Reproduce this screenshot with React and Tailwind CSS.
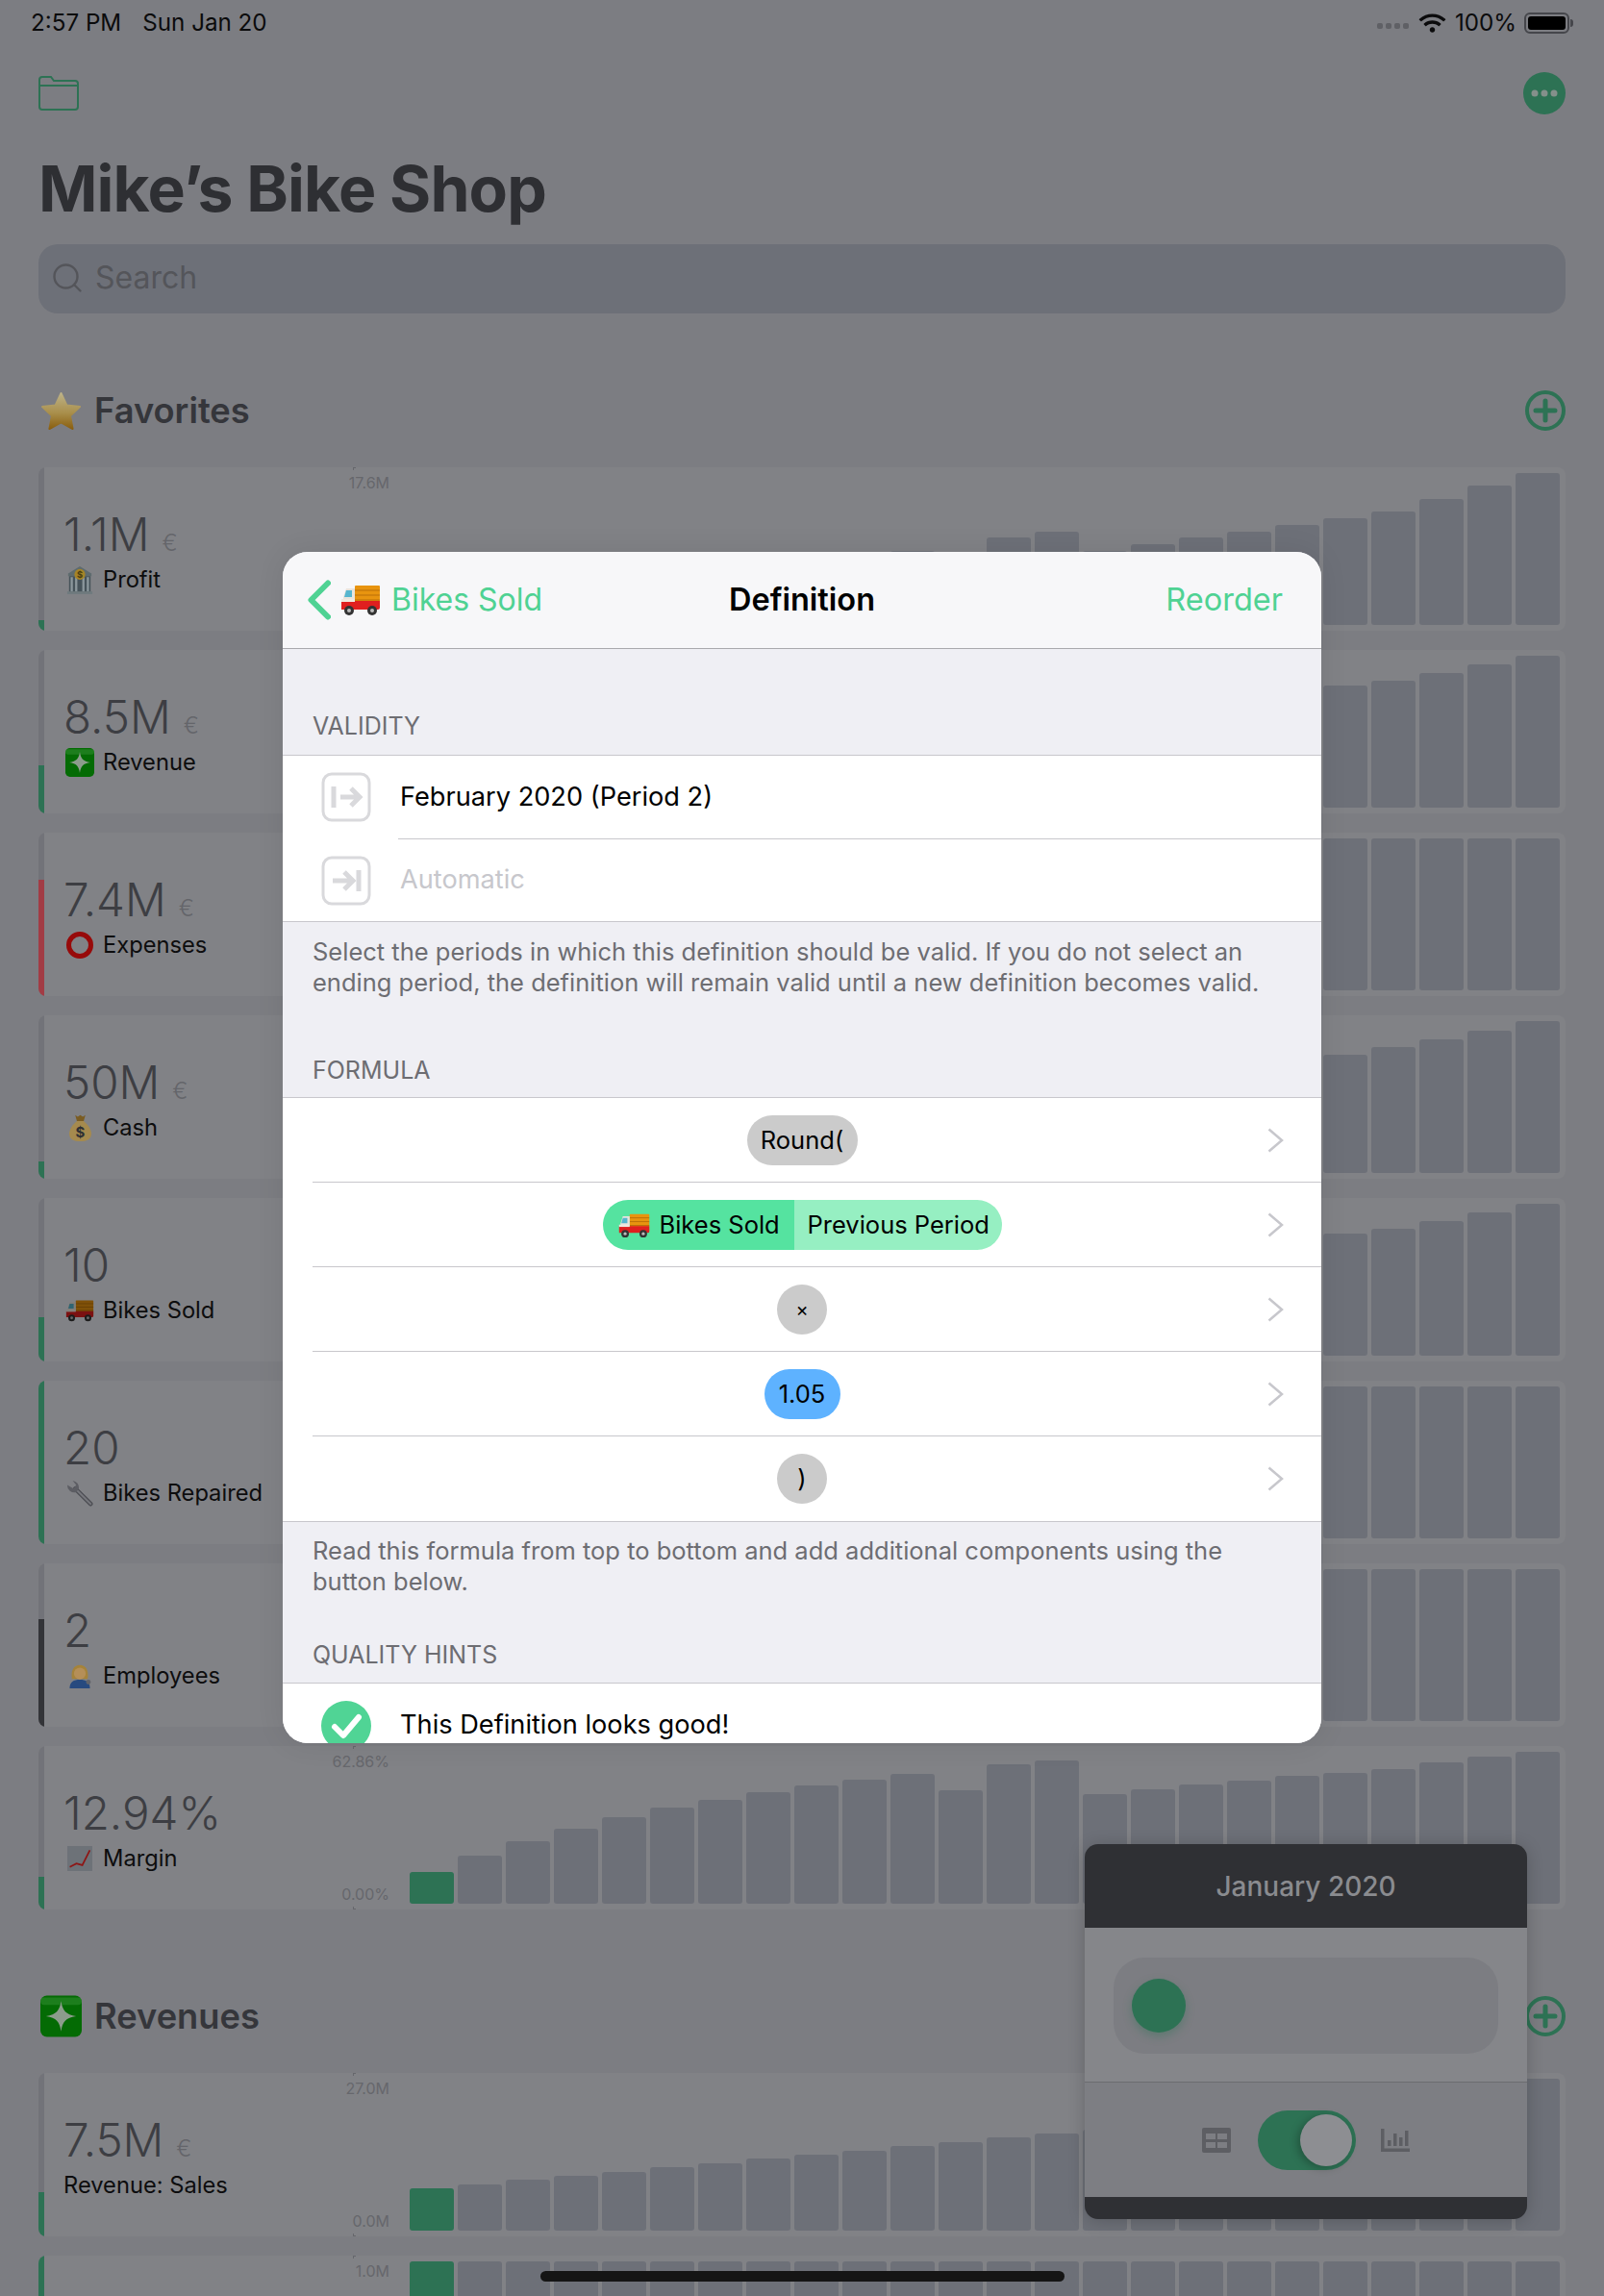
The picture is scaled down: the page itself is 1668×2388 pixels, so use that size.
import { Search } from "lucide-react";
import { FaWifi } from "react-icons/fa";

const FONT = "[font-family:Inter,'Noto_Sans',sans-serif]";

// --- little drawn emoji, the dim ones sit behind the sheet ---
function Truck({ className }) {
  return (
    <svg viewBox="0 0 42 34" className={className}>
      <rect x="15" y="2" width="26" height="22" rx="1" fill="#e8940f" />
      <path d="M15 7h26M15 12h26M15 17h26" stroke="#b96f08" strokeWidth="1.2" />
      <path d="M3 14 6 5h9v12H3z" fill="#e9e4dc" />
      <path d="M6 7h6v7H4z" fill="#57b6cf" />
      <path d="M1 18h40v7a2 2 0 0 1-2 2H1z" fill="#e01f1f" />
      <rect x="1" y="16" width="14" height="3" fill="#f0e9e0" />
      <circle cx="9" cy="28" r="5" fill="#333" />
      <circle cx="9" cy="28" r="2" fill="#bbb" />
      <circle cx="33" cy="28" r="5" fill="#333" />
      <circle cx="33" cy="28" r="2" fill="#bbb" />
    </svg>
  );
}

function Star({ className }) {
  return (
    <svg viewBox="0 0 44 42" className={className}>
      <defs>
        <linearGradient id="starfill" x1="0" y1="0" x2="0" y2="1">
          <stop offset="0" stopColor="#bdb287" />
          <stop offset="0.55" stopColor="#a98f4c" />
          <stop offset="1" stopColor="#8a5f10" />
        </linearGradient>
      </defs>
      <path
        d="M22 2.500l6 12.800 14 1.700-10.300 9.600 2.700 13.900L22 33.700 9.600 40.500l2.700-13.900L2 17l14-1.700z"
        fill="url(#starfill)"
        stroke="url(#starfill)"
        strokeWidth="2"
        strokeLinejoin="round"
      />
    </svg>
  );
}

function Sparkle({ className }) {
  return (
    <svg viewBox="0 0 44 44" className={className}>
      <rect width="44" height="44" rx="7" fill="#046b04" />
      <path d="M4 2h36a4 4 0 0 1 0 8H4a4 4 0 0 1 0-8z" fill="#2f8a2f" opacity="0.6" />
      <path d="M22 6c1.500 10 5 14.500 16 16-11 1.500-14.500 6-16 16-1.500-10-5-14.500-16-16 11-1.500 14.500-6 16-16z" fill="#8c9c8c" />
    </svg>
  );
}

function Ring({ className }) {
  return (
    <svg viewBox="0 0 30 30" className={className}>
      <circle cx="15" cy="15" r="11.500" fill="none" stroke="#970a0a" strokeWidth="5" />
    </svg>
  );
}

function Bank({ className }) {
  return (
    <svg viewBox="0 0 30 32" className={className}>
      <path d="M15 1 28 9v3H2V9z" fill="#5e6b6e" />
      <rect x="3" y="12" width="24" height="18" fill="#46535a" />
      <path d="M6 13v16M11 13v16M19 13v16M24 13v16" stroke="#8b979c" strokeWidth="2.500" />
      <rect x="1" y="29" width="28" height="3" fill="#6f7a7e" />
      <circle cx="15" cy="10" r="6" fill="#a58426" />
      <text x="15" y="14" textAnchor="middle" fontSize="10" fontWeight="700" fill="#4b3d10">$</text>
    </svg>
  );
}

function MoneyBag({ className }) {
  return (
    <svg viewBox="0 0 30 34" className={className}>
      <path d="M9 2l3 2 3-2 3 2 3-2-2 7h-8z" fill="#7a5c22" />
      <path d="M11 9h8c5 4 9 10 9 15 0 6-5 9-13 9S2 30 2 24c0-5 4-11 9-15z" fill="#a58a4e" />
      <text x="15" y="28" textAnchor="middle" fontSize="17" fontWeight="700" fill="#2e2f33">$</text>
    </svg>
  );
}

function Wrench({ className }) {
  return (
    <svg viewBox="0 0 32 30" className={className}>
      <path d="M28 27 11 10" stroke="#4e4f55" strokeWidth="5" strokeLinecap="round" />
      <path d="M28 27 12 11" stroke="#77787e" strokeWidth="2" strokeLinecap="round" />
      <path d="M2 6a8 8 0 0 0 10 8l3-4a8 8 0 0 0-7-9l4 5-3 4z" fill="#5c5d63" />
    </svg>
  );
}

function Mechanic({ className }) {
  return (
    <svg viewBox="0 0 32 32" className={className}>
      <path d="M6 20C4 8 9 2 16 2s12 6 10 18z" fill="#a5833a" />
      <circle cx="16" cy="13" r="7.500" fill="#b58f58" />
      <path d="M3 32c0-8 5-11 13-11s13 3 13 11z" fill="#274a7f" />
      <circle cx="27" cy="24" r="3" fill="#62646a" />
    </svg>
  );
}

function ChartEmoji({ className }) {
  return (
    <svg viewBox="0 0 30 30" className={className}>
      <rect width="30" height="30" fill="#6d7278" />
      <path d="M3 25l8-4 7 2 9-18" fill="none" stroke="#8e1515" strokeWidth="2" />
    </svg>
  );
}

// --- outline icons ---
function Folder({ className }) {
  return (
    <svg viewBox="0 0 42 37" className={className} fill="none" stroke="#2d7254" strokeWidth="2">
      <path d="M1 5a3 3 0 0 1 3-3h9l3 4h22a3 3 0 0 1 3 3v24a3 3 0 0 1-3 3H4a3 3 0 0 1-3-3z" />
      <path d="M1 11h40" />
    </svg>
  );
}

function PlusCircle({ className }) {
  return (
    <svg viewBox="0 0 42 42" className={className} fill="none" stroke="#2d7254" strokeWidth="4">
      <circle cx="21" cy="21" r="19" />
      <path d="M21 11v20M11 21h20" strokeWidth="5" strokeLinecap="round" />
    </svg>
  );
}

function PeriodIcon({ end }) {
  return (
    <svg viewBox="0 0 52 52" className="h-[52px] w-[52px]" fill="none" stroke="#d9d9dc">
      <rect x="2" y="2" width="48" height="48" rx="9" strokeWidth="3" />
      {end ? (
        <>
          <path d="M12 26h20M24 17l9 9-9 9" strokeWidth="5" />
          <path d="M39 15v22" strokeWidth="5" />
        </>
      ) : (
        <>
          <path d="M13 15v22" strokeWidth="5" />
          <path d="M20 26h20M31 17l9 9-9 9" strokeWidth="5" />
        </>
      )}
    </svg>
  );
}

function RowChevron() {
  return (
    <svg viewBox="0 0 17 26" className="h-[26px] w-[17px]" fill="none" stroke="#c7c7cc" strokeWidth="2.500">
      <path d="M1.500 1.500 15 13 1.500 24.500" />
    </svg>
  );
}

// --- background list ---
const ramp = (tail) => Array.from({ length: 24 - tail.length }, (_, i) => 30 + i * 3).concat(tail);
const FULL = Array(24).fill(158);

const favorites = [
  {
    value: "1.1M", unit: "€", label: "Profit", icon: <Bank className="h-[30px] w-[28px]" />,
    accent: "bg-[#2d7254]", accentH: 11, top: "17.6M",
    bars: [30, 34, 38, 42, 46, 50, 54, 58, 62, 66, 77, 70, 91, 97, 77, 84, 91, 97, 104, 111, 118, 131, 145, 158],
  },
  {
    value: "8.5M", unit: "€", label: "Revenue", icon: <Sparkle className="h-[30px] w-[30px]" />,
    accent: "bg-[#2d7254]", accentH: 50, bars: ramp([127, 132, 140, 149, 158]),
  },
  {
    value: "7.4M", unit: "€", label: "Expenses", icon: <Ring className="h-[30px] w-[30px]" />,
    accent: "bg-[#a23c45]", accentH: 121, bars: FULL,
  },
  {
    value: "50M", unit: "€", label: "Cash", icon: <MoneyBag className="h-[30px] w-[27px]" />,
    accent: "bg-[#2d7254]", accentH: 18, bars: ramp([123, 131, 139, 148, 158]),
  },
  {
    value: "10", label: "Bikes Sold", icon: <Truck className="h-[24px] w-[30px] brightness-[0.55]" />,
    accent: "bg-[#2d7254]", accentH: 46, bars: ramp([127, 132, 140, 149, 158]),
  },
  {
    value: "20", label: "Bikes Repaired", icon: <Wrench className="h-[28px] w-[30px]" />,
    accent: "bg-[#2d7254]", accentH: 170, bars: FULL,
  },
  {
    value: "2", label: "Employees", icon: <Mechanic className="h-[28px] w-[26px]" />,
    accent: "bg-[#333438]", accentH: 112, bars: FULL,
  },
  {
    value: "12.94%", label: "Margin", icon: <ChartEmoji className="h-[28px] w-[26px]" />,
    accent: "bg-[#2d7254]", accentH: 34, top: "62.86%", bottom: "0.00%",
    bars: [33, 50, 65, 78, 90, 100, 108, 116, 123, 129, 135, 118, 145, 149, 114, 119, 124, 128, 133, 136, 140, 147, 153, 158],
  },
];

const revenues = [
  {
    value: "7.5M", unit: "€", label: "Revenue: Sales", accent: "bg-[#2d7254]", accentH: 46,
    top: "27.0M", bottom: "0.0M",
    bars: [44, 48, 53, 57, 61, 66, 70, 75, 79, 83, 88, 92, 97, 101, 105, 110, 115, 120, 125, 130, 136, 142, 150, 158],
  },
  { value: "", label: "", accent: "bg-[#2d7254]", accentH: 170, top: "1.0M", bars: FULL },
];

function Card({ item }) {
  return (
    <div className="flex h-[170px] shrink-0 overflow-hidden rounded-lg bg-[#818286]">
      <div className="flex w-[6px] shrink-0 flex-col rounded-l-lg bg-[#727379]">
        <div className="flex-1" />
        <div className={item.accent} style={{ height: item.accentH }} />
      </div>
      <div className="w-[321px] shrink-0 pl-5 pt-[42px]">
        <div className="flex items-baseline gap-[13px]">
          <span className="text-[47.500px] leading-[56px] font-light text-[#3d3e43]">{item.value}</span>
          {item.unit && <span className="text-[24px] font-light text-[#64656a]">{item.unit}</span>}
        </div>
        <div className="mt-px flex h-[36px] items-center text-[23.700px] text-[#0d0d0e]">
          {item.icon && <span className="mr-[7px] flex w-[34px] justify-center">{item.icon}</span>}
          {item.label}
        </div>
      </div>
      <div className="relative flex flex-1 py-[6px] pr-[6px]">
        <span className="absolute top-0 left-0 h-[3px] w-[3px] border-t border-l border-[#66676c]" />
        <span className="absolute bottom-0 left-0 h-[3px] w-[3px] border-b border-l border-[#66676c]" />
        <div className="flex w-[38px] flex-col items-end justify-between whitespace-nowrap text-[16px] leading-5 text-[#66676c]">
          <span>{item.top}</span>
          <span>{item.bottom}</span>
        </div>
        <div className="ml-[21px] flex flex-1 items-end gap-1">
          {item.bars.map((h, i) => (
            <div
              key={i}
              className={`w-[46px] rounded-[3px] ${i === 0 ? "bg-[#2d7254]" : "bg-[#6d7078]"}`}
              style={{ height: h }}
            />
          ))}
        </div>
      </div>
    </div>
  );
}

function SectionTitle({ icon, title }) {
  return (
    <div className="flex h-[44px] items-center justify-between">
      <div className="flex items-center gap-[13px]">
        <span className="ml-[2px] flex h-[44px] w-[43px] items-center">{icon}</span>
        <span className="text-[36.300px] font-semibold text-[#35363b]">{title}</span>
      </div>
      <PlusCircle className="h-[42px] w-[42px]" />
    </div>
  );
}

// --- the sheet ---
function GroupLabel({ className, children }) {
  return (
    <div className={`flex shrink-0 items-end px-[31px] text-[25px] leading-8 text-[#6d6d72] ${className}`}>
      {children}
    </div>
  );
}

function GroupNote({ className, children }) {
  return <div className={`shrink-0 pr-10 pl-[31px] text-[25.500px] leading-8 text-[#6d6d72] ${className}`}>{children}</div>;
}

function FormulaRow({ last, children }) {
  return (
    <div className="relative flex h-[88px] items-center justify-center bg-white">
      {children}
      <span className="absolute top-1/2 right-[39px] flex -translate-y-1/2">
        <RowChevron />
      </span>
      {!last && <span className="absolute right-0 bottom-0 left-[31px] h-px bg-[#c8c7cc]" />}
    </div>
  );
}

function Pill({ className, children }) {
  return (
    <span className={`flex h-[52px] items-center justify-center rounded-[26px] text-[25.500px] text-black ${className}`}>
      {children}
    </span>
  );
}

function Sheet() {
  return (
    <div className="absolute top-[574px] left-[294px] flex h-[1239px] w-[1080px] flex-col overflow-hidden rounded-[26px] bg-[#efeff4] shadow-[0_0_30px_rgba(0,0,0,0.08)]">
      <div className="relative flex h-[101px] shrink-0 items-center justify-between border-b border-[#a9a9ad] bg-[#f7f7f9] pr-10 pl-[26px] text-[32px] text-[#4fd293]">
        <div className="flex items-center">
          <svg viewBox="0 0 24 42" className="h-[42px] w-[24px]" fill="none" stroke="#4fd293" strokeWidth="6" strokeLinecap="round" strokeLinejoin="round">
            <path d="M21 3.500 3.500 21 21 38.500" />
          </svg>
          <Truck className="ml-[10px] h-[34px] w-[42px]" />
          <span className="ml-[11px]">Bikes Sold</span>
        </div>
        <span className="absolute left-1/2 -translate-x-1/2 text-[32.500px] font-semibold text-black">Definition</span>
        <span className="text-[32.500px]">Reorder</span>
      </div>

      <GroupLabel className="h-[110px] pb-[14px]">VALIDITY</GroupLabel>
      <div className="shrink-0 border-y border-[#c8c7cc] bg-white text-[27.200px]">
        <div className="flex h-[86px] items-center pl-10">
          <PeriodIcon />
          <span className="ml-[30px] text-black">February 2020 (Period 2)</span>
        </div>
        <div className="ml-[120px] h-px bg-[#c8c7cc]" />
        <div className="flex h-[85px] items-center pl-10">
          <PeriodIcon end />
          <span className="ml-[30px] text-[#c7c7cc]">Automatic</span>
        </div>
      </div>
      <GroupNote className="pt-[15px]">
        Select the periods in which this definition should be valid. If you do not select an ending period, the definition will remain valid until a new definition becomes valid.
      </GroupNote>

      <GroupLabel className="h-[103px] pb-[12px]">FORMULA</GroupLabel>
      <div className="shrink-0 border-y border-[#c8c7cc]">
        <FormulaRow>
          <Pill className="w-[115px] bg-[#cbcbcb]">Round(</Pill>
        </FormulaRow>
        <FormulaRow>
          <div className="flex h-[52px] w-[415px] overflow-hidden rounded-[26px] text-[25.500px] text-black">
            <span className="flex w-[199px] items-center gap-[10px] bg-[#55e3a0] pl-4">
              <Truck className="h-[27px] w-[33px]" />
              Bikes Sold
            </span>
            <span className="flex flex-1 items-center bg-[#96efc2] pl-[14px]">Previous Period</span>
          </div>
        </FormulaRow>
        <FormulaRow>
          <Pill className="w-[52px] bg-[#cbcbcb] !text-[20px]">×</Pill>
        </FormulaRow>
        <FormulaRow>
          <Pill className="w-[79px] bg-[#5eb2ff]">1.05</Pill>
        </FormulaRow>
        <FormulaRow last>
          <Pill className="w-[52px] bg-[#cbcbcb]">)</Pill>
        </FormulaRow>
      </div>
      <GroupNote className="pt-[14px]">
        Read this formula from top to bottom and add additional components using the button below.
      </GroupNote>

      <GroupLabel className="h-[89px] pb-[13px]">QUALITY HINTS</GroupLabel>
      <div className="flex h-[88px] shrink-0 items-center border-t border-[#c8c7cc] bg-white pl-10 text-[27.200px] text-black">
        <svg viewBox="0 0 52 52" className="h-[52px] w-[52px] shrink-0">
          <circle cx="26" cy="26" r="26" fill="#50d495" />
          <path d="M14 27l9 9 16-19" fill="none" stroke="#fff" strokeWidth="6" strokeLinecap="round" strokeLinejoin="round" />
        </svg>
        <span className="ml-[30px]">This Definition looks good!</span>
      </div>
    </div>
  );
}

function MonthPopup() {
  return (
    <div className="absolute top-[1918px] left-[1128px] flex h-[390px] w-[460px] flex-col overflow-hidden rounded-[14px] bg-[#2f3034] shadow-[0_2px_18px_rgba(0,0,0,0.2)]">
      <div className="flex h-[87px] shrink-0 items-center justify-center text-[28px] font-medium text-[#8a8b8f]">
        January 2020
      </div>
      <div className="h-[160px] shrink-0 bg-[#85868a] px-[30px] pt-[31px]">
        <div className="flex h-[100px] items-center rounded-[32px] bg-[#7c7d82] pl-[19px]">
          <span className="h-[56px] w-[56px] rounded-full bg-[#2d7254] shadow-[0_4px_10px_rgba(45,114,84,0.4)]" />
        </div>
      </div>
      <div className="flex h-[120px] shrink-0 items-center justify-center gap-[30px] border-t border-[#6b6c70] bg-[#7d7e83]">
        <svg viewBox="0 0 30 26" className="-mr-[2px] h-[26px] w-[30px]">
          <rect width="30" height="26" rx="2" fill="#5d5e63" />
          <path d="M4 6h10v6H4zM16 6h10v6H16zM4 15h10v6H4zM16 15h10v6H16z" fill="#7d7e83" />
        </svg>
        <div className="flex h-[62px] w-[102px] items-center justify-end rounded-[31px] bg-[#2d7254] pr-[4px]">
          <span className="h-[54px] w-[54px] rounded-full bg-[#8d8e92] shadow-[-3px_2px_8px_rgba(0,0,0,0.25)]" />
        </div>
        <svg viewBox="0 0 30 24" className="-ml-1 h-[24px] w-[30px]" fill="#5d5e63">
          <path d="M0 0h3.500v20.500H30V24H0z" />
          <path d="M7 12h3.500v6H7zM13 5h3.500v13H13zM19 9h3.500v9H19zM25 2h3.500v16H25z" />
        </svg>
      </div>
    </div>
  );
}

export default function App() {
  return (
    <div className={`relative h-[2388px] w-[1668px] overflow-hidden bg-[#7c7d82] ${FONT}`}>
      <div className="flex h-12 items-center justify-between px-8 text-[24.200px] text-[#0b0b0c]">
        <div className="flex gap-[22px]">
          <span>2:57 PM</span>
          <span>Sun Jan 20</span>
        </div>
        <div className="flex items-center">
          <span className="mt-[7px] mr-[10px] flex gap-[3px]">
            <i className="h-[6px] w-[6px] rounded-[2px] bg-[#5f6065]" />
            <i className="h-[6px] w-[6px] rounded-[2px] bg-[#5f6065]" />
            <i className="h-[6px] w-[6px] rounded-[2px] bg-[#5f6065]" />
            <i className="h-[6px] w-[6px] rounded-[2px] bg-[#5f6065]" />
          </span>
          <FaWifi className="mr-[9px] h-[22px] w-[29px]" />
          <span className="mr-2">100%</span>
          <span className="flex h-[22px] w-[47px] rounded-[6px] border-2 border-[#45464b] p-[2px]">
            <span className="flex-1 rounded-[3px] bg-black" />
          </span>
          <span className="ml-[1px] h-[8px] w-[3px] rounded-r-sm bg-[#45464b]" />
        </div>
      </div>

      <div className="px-10">
        <div className="mt-[27px] flex h-[43px] items-center justify-between">
          <Folder className="h-[37px] w-[42px]" />
          <svg viewBox="0 0 44 44" className="h-[44px] w-[44px]">
            <circle cx="22" cy="22" r="22" fill="#2d7254" />
            <circle cx="12" cy="22" r="3.500" fill="#84908b" />
            <circle cx="22" cy="22" r="3.500" fill="#84908b" />
            <circle cx="32" cy="22" r="3.500" fill="#84908b" />
          </svg>
        </div>
        <h1 className="mt-[38px] text-[66px] leading-[80px] font-bold tracking-[-0.9px] text-[#2e2f33]">Mike’s Bike Shop</h1>
        <div className="mt-[18px] flex h-[72px] items-center rounded-[20px] bg-[#6d7078] pb-[2px] pl-3 text-[32px] text-[#54555a]">
          <Search className="h-9 w-9" strokeWidth={1.6} />
          <span className="ml-[11px]">Search</span>
        </div>

        <div className="mt-[79px]">
          <SectionTitle icon={<Star className="h-[42px] w-[43px]" />} title="Favorites" />
        </div>
        <div className="mt-[37px] flex flex-col gap-5">
          {favorites.map((item) => (
            <Card key={item.label} item={item} />
          ))}
        </div>

        <div className="mt-[89px]">
          <SectionTitle icon={<Sparkle className="h-[44px] w-[43px]" />} title="Revenues" />
        </div>
        <div className="mt-[37px] flex flex-col gap-5">
          {revenues.map((item) => (
            <Card key={item.top} item={item} />
          ))}
        </div>
      </div>

      <MonthPopup />
      <Sheet />

      <div className="absolute top-[2362px] left-[562px] h-[11px] w-[545px] rounded-full bg-[#151515]" />
    </div>
  );
}
